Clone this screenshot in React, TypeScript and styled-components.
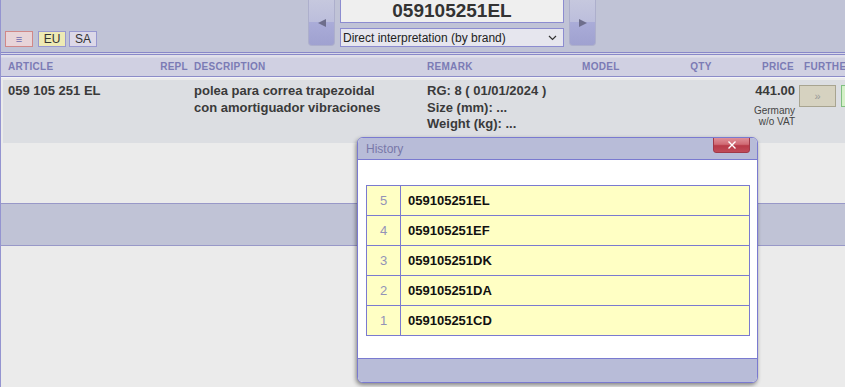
import styled, { createGlobalStyle } from 'styled-components';

const GlobalStyle = createGlobalStyle`
	html, body {
		margin: 0;
		padding: 0;
		overflow: hidden;
		background: #ebebeb;
		font-family: "Liberation Sans", Arial, sans-serif;
	}
`;

const Page = styled.div`
	position: relative;
	width: 845px;
	height: 387px;
	overflow: hidden;
	border-left: 1px solid #9494d0;
	box-sizing: border-box;
	background: #ebebeb;
`;

const TopBar = styled.div`
	display: flex;
	align-items: flex-start;
	height: 52px;
	background: #c0c3d6;
`;

const LangGroup = styled.div`
	display: flex;
	align-self: flex-end;
	width: 307px;
	padding: 0 0 5px 4px;
	box-sizing: border-box;
`;

const LangBtn = styled.div<{ $bg: string; $border: string; $gap: number }>`
	display: flex;
	justify-content: center;
	align-items: center;
	width: 26px;
	height: 14px;
	margin-right: ${({ $gap }) => $gap}px;
	background: ${({ $bg }) => $bg};
	border: 1px solid ${({ $border }) => $border};
	font-size: 12px;
	color: #333;
	line-height: 1;
`;

const MenuGlyph = styled.span`
	font-size: 11px;
	color: #6a6ab0;
`;

const NavGroup = styled.div`
	display: flex;
	gap: 5px;
`;

const ArrowBtn = styled.div`
	display: flex;
	justify-content: center;
	align-items: center;
	width: 27px;
	height: 46px;
	box-sizing: border-box;
	border: 1px solid #adafcc;
	border-top: none;
	border-radius: 0 0 4px 4px;
	background: linear-gradient(
		to bottom,
		#c6c8de 0%,
		#bcbedc 48%,
		#aaacd8 50%,
		#9fa1d0 100%
	);
`;

const SearchCol = styled.div`
	display: flex;
	flex-direction: column;
	gap: 5px;
`;

const CodeInput = styled.div`
	width: 224px;
	height: 23px;
	box-sizing: border-box;
	border: 1px solid #8c8cd0;
	border-top: none;
	background: #efefef;
	color: #333;
	font-size: 19px;
	font-weight: 700;
	text-align: center;
	line-height: 22px;
`;

const ModeSelect = styled.div`
	display: flex;
	justify-content: space-between;
	align-items: center;
	width: 224px;
	height: 19px;
	box-sizing: border-box;
	padding: 0 6px 0 2px;
	border: 1px solid #8c8cd0;
	background: #e6e6ee;
	color: #222;
	font-size: 12px;
`;

const Divider = styled.div`
	height: 3px;
	border-top: 1px solid #8888c8;
	border-bottom: 1px solid #8888c8;
	box-sizing: border-box;
	background: #d8d8e8;
`;

const Grid = styled.div`
	display: grid;
	grid-template-columns: 128px 60px 233px 155px 84px 80px 57px 103px;
	width: 900px;
`;

const HeadRow = styled(Grid)`
	height: 22px;
	align-items: center;
	background: linear-gradient(to bottom, #e0e0ea 0px, #e0e0ea 2px, #d0d0e2 3px);
	border-bottom: 1px solid #8c8cc8;
	box-sizing: border-box;
	margin-bottom: 3px;
	box-shadow: 0 1px 0 #f4f4f8;
`;

const HeadCell = styled.div<{ $align?: string; $pad?: string }>`
	padding: ${({ $pad }) => $pad ?? '0 0 0 5px'};
	text-align: ${({ $align }) => $align ?? 'left'};
	font-size: 10px;
	font-weight: 700;
	letter-spacing: 0.3px;
	color: #7b7bb5;
	white-space: nowrap;
	padding-top: 2px;
`;

const DataRow = styled(Grid)`
	grid-template-columns: 126px 60px 233px 155px 84px 80px 57px 103px;
	height: 63px;
	margin-left: 2px;
	padding-top: 3px;
	box-sizing: border-box;
	background: #dcdee2;
	color: #3a3a3a;
	font-size: 13px;
	font-weight: 700;
	line-height: 16.5px;
`;

const Cell = styled.div<{ $align?: string; $pad?: string }>`
	padding: ${({ $pad }) => $pad ?? '0 0 0 5px'};
	text-align: ${({ $align }) => $align ?? 'left'};
	white-space: nowrap;
`;

const PriceNote = styled.div`
	margin-top: 5px;
	font-size: 10px;
	font-weight: 400;
	line-height: 11px;
	color: #444;
`;

const Actions = styled.div`
	display: flex;
	gap: 5px;
	padding: 2px 0 0 1px;
`;

const MoreBtn = styled.div<{ $bg: string; $border: string }>`
	display: flex;
	justify-content: center;
	align-items: center;
	width: 37px;
	height: 22px;
	box-sizing: border-box;
	background: ${({ $bg }) => $bg};
	border: 1px solid ${({ $border }) => $border};
	color: #999;
	font-size: 11px;
	font-weight: 400;
`;

const EmptyArea = styled.div`
	height: 60px;
`;

const Band = styled.div`
	height: 43px;
	box-sizing: border-box;
	background: #c0c3d6;
	border-top: 1px solid #9898c8;
	border-bottom: 1px solid #9898c8;
`;

const Modal = styled.div`
	position: absolute;
	left: 356px;
	top: 137px;
	width: 401px;
	height: 246px;
	display: flex;
	flex-direction: column;
	box-sizing: border-box;
	border: 1px solid #7a7ad0;
	border-radius: 6px;
	overflow: hidden;
	background: #fff;
	box-shadow: -1px 2px 4px rgba(0, 0, 0, 0.45);
`;

const ModalTitle = styled.div`
	position: relative;
	display: flex;
	align-items: center;
	height: 22px;
	padding: 1px 0 0 8px;
	box-sizing: border-box;
	background: #b8bcd8;
	border-bottom: 1px solid #7a7ad0;
	font-size: 12px;
	color: #7878a8;
`;

const CloseBtn = styled.div`
	position: absolute;
	right: 7px;
	top: -1px;
	display: flex;
	justify-content: center;
	align-items: center;
	width: 37px;
	height: 16px;
	box-sizing: border-box;
	border: 1px solid #a03848;
	border-radius: 0 0 3px 3px;
	background: linear-gradient(to bottom, #e09098 0%, #d06a74 45%, #b83a48 55%, #c04a58 100%);
`;

const ModalBody = styled.div`
	flex: 1;
	padding: 25px 7px 0 8px;
`;

const HistoryTable = styled.table`
	width: 384px;
	border-collapse: collapse;
	border: 1px solid #7a7ad0;
	background: #ffffc4;
`;

const NumCell = styled.td`
	width: 33px;
	height: 29px;
	padding: 0;
	border: 1px solid #7a7ad0;
	text-align: center;
	font-size: 13px;
	color: #9292b8;
`;

const CodeCell = styled.td`
	padding: 0 0 0 7px;
	border: 1px solid #7a7ad0;
	font-size: 13px;
	font-weight: 700;
	color: #111;
`;

const ModalFooter = styled.div`
	height: 23px;
	background: #b8bcd8;
	border-top: 1px solid #7a7ad0;
`;

const history = ['059105251EL', '059105251EF', '059105251DK', '059105251DA', '059105251CD'];

function Triangle({ dir }: { dir: 'left' | 'right' }) {
	return (
		<svg width="10" height="10" viewBox="0 0 10 10">
			{dir === 'left' ? (
				<polygon points="1,5 9,1 9,9" fill="#6e6e8c" />
			) : (
				<polygon points="9,5 1,1 1,9" fill="#6e6e8c" />
			)}
		</svg>
	);
}

export default function App() {
	return (
		<>
			<GlobalStyle />
			<Page>
				<TopBar>
					<LangGroup>
						<LangBtn $bg="#e8d4d8" $border="#d08888" $gap={5}>
							<MenuGlyph>≡</MenuGlyph>
						</LangBtn>
						<LangBtn $bg="#eeeab4" $border="#9898d0" $gap={3}>EU</LangBtn>
						<LangBtn $bg="#dcd8e8" $border="#9898d0" $gap={0}>SA</LangBtn>
					</LangGroup>
					<NavGroup>
						<ArrowBtn>
							<Triangle dir="left" />
						</ArrowBtn>
						<SearchCol>
							<CodeInput>059105251EL</CodeInput>
							<ModeSelect>
								<span>Direct interpretation (by brand)</span>
								<svg width="9" height="6" viewBox="0 0 9 6">
									<polyline points="1,1 4.5,4.5 8,1" fill="none" stroke="#333" strokeWidth="1.2" />
								</svg>
							</ModeSelect>
						</SearchCol>
						<ArrowBtn>
							<Triangle dir="right" />
						</ArrowBtn>
					</NavGroup>
				</TopBar>
				<Divider />
				<HeadRow>
					<HeadCell $pad="0 0 0 7px">ARTICLE</HeadCell>
					<HeadCell $align="right" $pad="0 1px 0 0">REPL</HeadCell>
					<HeadCell>DESCRIPTION</HeadCell>
					<HeadCell>REMARK</HeadCell>
					<HeadCell>MODEL</HeadCell>
					<HeadCell $align="center" $pad="0">QTY</HeadCell>
					<HeadCell $align="right" $pad="0 4px 0 0">PRICE</HeadCell>
					<HeadCell $pad="0 0 0 6px">FURTHER</HeadCell>
				</HeadRow>
				<DataRow>
					<Cell $pad="0 0 0 5px">059 105 251 EL</Cell>
					<Cell />
					<Cell>
						polea para correa trapezoidal
						<br />
						con amortiguador vibraciones
					</Cell>
					<Cell>
						RG: 8 ( 01/01/2024 )
						<br />
						Size (mm): ...
						<br />
						Weight (kg): ...
					</Cell>
					<Cell />
					<Cell />
					<Cell $align="right" $pad="0 3px 0 0">
						441.00
						<PriceNote>
							Germany
							<br />
							w/o VAT
						</PriceNote>
					</Cell>
					<Actions>
						<MoreBtn $bg="#d6d2c0" $border="#a8a490">»</MoreBtn>
						<MoreBtn $bg="#d4f0c8" $border="#80c080" />
					</Actions>
				</DataRow>
				<EmptyArea />
				<Band />
				<Modal>
					<ModalTitle>
						History
						<CloseBtn>
							<svg width="10" height="10" viewBox="0 0 10 10">
								<path d="M1.5 1.5 L8.5 8.5 M8.5 1.5 L1.5 8.5" stroke="#fff" strokeWidth="1.4" />
							</svg>
						</CloseBtn>
					</ModalTitle>
					<ModalBody>
						<HistoryTable>
							<tbody>
								{history.map((code, i) => (
									<tr key={code}>
										<NumCell>{history.length - i}</NumCell>
										<CodeCell>{code}</CodeCell>
									</tr>
								))}
							</tbody>
						</HistoryTable>
					</ModalBody>
					<ModalFooter />
				</Modal>
			</Page>
		</>
	);
}
